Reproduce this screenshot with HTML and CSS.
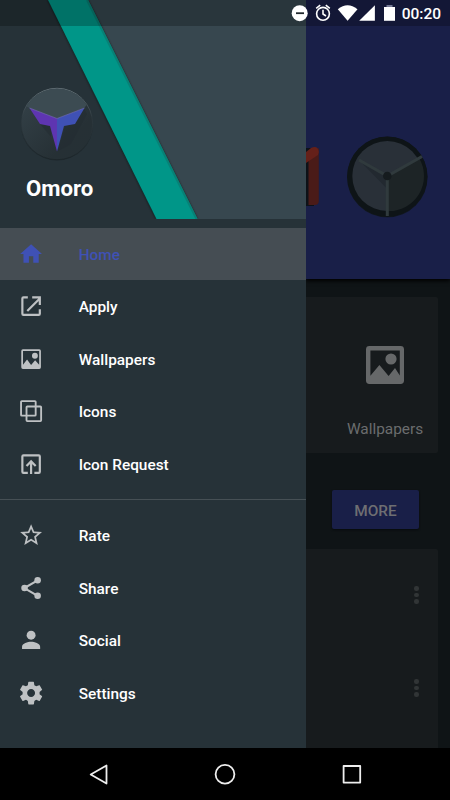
FILE: index.html
```html
<!DOCTYPE html>
<html lang="en">
<head>
<meta charset="utf-8">
<title>Omoro</title>
<link rel="stylesheet" href="styles.css">
</head>
<body>
<div class="screen">
  <div class="app">
    <aside class="drawer">
      <header class="drawer-header">
        <svg class="banner" viewBox="0 0 306 219">
          <defs><filter id="soft" x="-20%" y="-20%" width="140%" height="140%"><feGaussianBlur stdDeviation="1"/></filter></defs>
          <path fill="#37474f" d="M80 0H306V219H190z"/>
          <path d="M47.500 0H88L197.500 219H156z" fill="#00150f" opacity=".6" filter="url(#soft)"/>
          <path fill="#009688" d="M48 0H88L197.500 219H156.500z"/>
          <path d="M87 0L196.500 219" stroke="#078176" stroke-width="2"/>
        </svg>
        <div class="brand">
          <svg class="logo" viewBox="0 0 76 76">
            <defs>
              <linearGradient id="disc" x1="0" y1="0" x2="1" y2="1"><stop offset="0" stop-color="#35434a"/><stop offset=".7" stop-color="#263035"/><stop offset="1" stop-color="#253035"/></linearGradient>
              <linearGradient id="rim" x1="0" y1="0" x2="0" y2="1"><stop offset="0" stop-color="#78858b"/><stop offset=".4" stop-color="#303c42"/><stop offset="1" stop-color="#1b2428"/></linearGradient>
              <clipPath id="round"><circle cx="38" cy="38" r="35.500"/></clipPath>
            </defs>
            <circle cx="38" cy="38.600" r="36" fill="#1f292e"/>
            <circle cx="38" cy="38" r="35.700" fill="url(#disc)" stroke="url(#rim)" stroke-width=".8"/>
            <path clip-path="url(#round)" fill="#3c4b52" d="M0 16L10.500 22L38 32.500L65 22L76 10V0H0z"/>
            <path fill="#222c31" opacity=".55" d="M21 38L32 51V40zM46 40L56 37L65 22L68 28L52 58L39 65z"/>
            <path fill="#5e35b1" d="M10.500 22L38 32.500V65.500L31 40L21 38z"/>
            <path fill="#3f51b5" d="M65.500 22L38 32.500V65.500L45 40L56 38z"/>
            <path fill="none" stroke="#7771b5" stroke-width=".6" d="M10.500 22L38 32.500L65.500 22"/>
          </svg>
          <h1>Omoro</h1>
        </div>
      </header>
      <nav class="menu">
        <a class="item active"><svg viewBox="0 0 24 24"><path d="M10 20v-6h4v6h5v-8h3L12 3 2 12h3v8z"/></svg><span>Home</span></a>
        <a class="item"><svg viewBox="0 0 24 24"><path class="line" d="M9 4H5a1 1 0 0 0-1 1v14a1 1 0 0 0 1 1h14a1 1 0 0 0 1-1v-4M8.500 16.500L19.500 5.500M13 4h7v7"/></svg><span>Apply</span></a>
        <a class="item"><svg viewBox="0 0 24 24"><path fill-rule="evenodd" d="M4.500 3h15q1.500 0 1.500 1.500v15q0 1.500-1.500 1.500h-15Q3 21 3 19.500v-15Q3 3 4.500 3zM4.600 4.600v12.600l3.700-4.900 3.700 5 3.700-4.300 3.700 4.200V4.600zM15.500 6.300a2.700 2.700 0 1 1 0 5.400 2.700 2.700 0 0 1 0-5.400z"/></svg><span>Wallpapers</span></a>
        <a class="item"><svg viewBox="0 0 24 24"><path class="line thin" d="M3.500 2.800h12q.7 0 .7.700v12q0 .7-.7.700h-12q-.7 0-.7-.7v-12q0-.7.700-.7zM8.500 7.800h12q.7 0 .7.700v12q0 .7-.7.700h-12q-.7 0-.7-.7v-12q0-.7.700-.7z"/></svg><span>Icons</span></a>
        <a class="item"><svg viewBox="0 0 24 24"><path class="line" d="M9 20H5a1 1 0 0 1-1-1V5a1 1 0 0 1 1-1h14a1 1 0 0 1 1 1v14a1 1 0 0 1-1 1h-4M12 21V10.500M7.800 13.700L12 9.500l4.200 4.200"/></svg><span>Icon Request</span></a>
        <hr>
        <a class="item"><svg viewBox="0 0 24 24"><path d="M22 9.240l-7.190-.62L12 2 9.190 8.630 2 9.240l5.460 4.730L5.820 21 12 17.270 18.180 21l-1.630-7.030L22 9.240zM12 15.400l-3.760 2.270 1-4.280-3.320-2.880 4.380-.38L12 6.100l1.710 4.040 4.380.38-3.320 2.880 1 4.280L12 15.400z"/></svg><span>Rate</span></a>
        <a class="item"><svg viewBox="0 0 24 24"><path class="line" d="M18 4.900L5.800 12 18 19.100"/><circle cx="18" cy="4.900" r="3"/><circle cx="6" cy="12" r="3"/><circle cx="18" cy="19.100" r="3"/></svg><span>Share</span></a>
        <a class="item"><svg viewBox="0 0 24 24"><circle cx="12" cy="7.500" r="4.100"/><path d="M12 13.500c-3 0-8.300 1.500-8.300 4.500v2.200h16.600V18c0-3-5.300-4.500-8.300-4.500z"/></svg><span>Social</span></a>
        <a class="item"><svg viewBox="0 0 24 24"><path transform="translate(12 12) scale(1.040) translate(-12 -12)" d="M19.430 12.980c.04-.32.07-.64.07-.98s-.03-.66-.07-.98l2.110-1.650c.19-.15.24-.42.12-.64l-2-3.460c-.12-.22-.39-.3-.61-.22l-2.490 1c-.52-.4-1.080-.73-1.690-.98l-.38-2.650C14.460 2.180 14.250 2 14 2h-4c-.25 0-.46.18-.49.42l-.38 2.650c-.61.25-1.170.59-1.690.98l-2.490-1c-.23-.09-.49 0-.61.22l-2 3.460c-.13.22-.07.49.12.640l2.110 1.650c-.04.32-.07.65-.07.980s.03.66.07.98l-2.110 1.650c-.19.15-.24.42-.12.640l2 3.460c.12.22.39.3.61.22l2.490-1c.52.4 1.080.73 1.690.98l.38 2.650c.03.24.24.42.49.42h4c.25 0 .46-.18.49-.42l.38-2.650c.61-.25 1.170-.59 1.690-.98l2.490 1c.23.09.49 0 .61-.22l2-3.460c.12-.22.07-.49-.12-.640l-2.110-1.650zM12 15.500c-1.930 0-3.500-1.570-3.500-3.500s1.570-3.500 3.500-3.500 3.500 1.570 3.500 3.500-1.570 3.500-3.500 3.500z"/></svg><span>Settings</span></a>
      </nav>
    </aside>
    <main class="content">
      <section class="hero">
        <svg class="hero-art" viewBox="0 0 144 100">
          <path fill="#0d1218" d="M0 13H8V71H0z"/>
          <path fill="#4a1b18" d="M2.500 18L12.800 13V66q0 4-4 4H2.500z"/>
          <path fill="#652019" d="M0 17L5 13Q12 10 12.800 17L12 20L0 28z"/>
          <circle cx="81.300" cy="42" r="40.300" fill="#11171d"/>
          <circle cx="81.300" cy="41.500" r="40" fill="#0e1417"/>
          <circle cx="81.300" cy="41" r="35" fill="#293038"/>
          <path fill="#1d2426" d="M81.300 41L113 23A35 35 0 0 1 81.300 76z"/>
          <path fill="#222930" d="M54 26L81.300 41V54z"/>
          <path d="M53 25L81.300 41L116 21.500M81.300 41V81" fill="none" stroke="#303a3d" stroke-width="3"/>
          <circle cx="81.300" cy="41" r="4.300" fill="#151b1e"/>
        </svg>
      </section>
      <section class="card tile">
        <svg viewBox="0 0 24 24"><path fill-rule="evenodd" d="M4.200 2.500h15.600q1.700 0 1.700 1.700v15.600q0 1.700-1.700 1.700H4.200q-1.700 0-1.700-1.700V4.200q0-1.700 1.700-1.700zM4.700 4.700v12.700l4.500-5.400 4.600 5.500 3.200-4 2.400 3.700V4.700zM15 6.200a2.800 2.800 0 1 1 0 5.600 2.800 2.800 0 0 1 0-5.600z"/></svg>
        <span>Wallpapers</span>
      </section>
      <button class="more">MORE</button>
      <section class="card list">
        <div class="dots"><i></i><i></i><i></i></div>
        <div class="dots"><i></i><i></i><i></i></div>
      </section>
    </main>
  </div>
  <footer class="navbar">
    <svg viewBox="0 0 450 53"><g fill="none" stroke="#eee" stroke-width="1.800" stroke-linejoin="round"><path d="M90.700 26.500L106.500 17.500V35.500z"/><circle cx="225" cy="26.300" r="9.400"/><path d="M343.600 18H360.200V34.600H343.600z"/></g></svg>
  </footer>
  <div class="status">
    <svg viewBox="0 0 110 26">
      <g fill="#fff"><circle cx="9.700" cy="13.200" r="8"/><path fill="#20282d" d="M6 12.300h8v1.800H6z"/>
      <path d="M47.800 9.200Q57.500 1.500 67.500 9.200L57.600 20.800z"/><path d="M84.900 5.200V20.700H69.200z"/>
      <path d="M94 7h11v13.800H94z"/></g><path fill="#747894" d="M96.500 5h6v2h-6z"/>
      <g fill="none" stroke="#fff" stroke-width="1.600"><circle cx="33" cy="13.800" r="6.400"/><path d="M33 9.800V14l3 2M26.200 8.400l4-3.200M39.800 8.400l-4-3.200"/></g>
    </svg>
    <span>00:20</span>
  </div>
</div>
</body>
</html>
```
FILE: styles.css
```css
* { box-sizing: border-box; }
body { margin: 0; background: #000; font-family: Roboto, sans-serif; }
svg { display: block; }
.screen { position: relative; width: 450px; height: 800px; overflow: hidden; display: flex; flex-direction: column; }
.app { display: flex; height: 747.5px; }

.drawer { width: 306px; flex: none; background: #263238; }
.drawer-header { position: relative; height: 219px; padding: 86px 0 0 19px; }
.banner { position: absolute; inset: 0; width: 306px; height: 219px; }
.brand { position: relative; width: 82px; }
.logo { width: 76px; height: 76px; }
h1 { margin: 13px 0 0 7px; font-size: 22.2px; line-height: 26px; font-weight: 700; color: #fff; }

.menu { padding-top: 8.5px; }
.item { display: flex; align-items: center; gap: 35px; height: 52.5px; padding-left: 17.5px; color: #fff; font-size: 15.4px; font-weight: 500; }
.item span { padding-top: 1.5px; }
.item svg { width: 26.2px; height: 26.2px; fill: #bec1c3; }
.item .line { fill: none; stroke: #bec1c3; stroke-width: 2; }
.item .thin { stroke-width: 1.7; }
.item.active { background: #454d53; color: #3f51b5; }
.item.active svg { fill: #3f51b5; }
hr { margin: 8.5px 0 9.5px; border: 0; height: 1px; background: #465055; }

.content { flex: 1; display: flex; flex-direction: column; background: #0f1416; overflow: hidden; }
.hero { height: 279px; flex: none; padding-top: 135px; background: #191f48; box-shadow: 0 2px 4px #000; }
.hero-art { width: 144px; height: 100px; }
.card { background: #171b1d; margin-right: 12px; }
.tile { margin-top: 18px; height: 156px; flex: none; border-radius: 0 2px 2px 0; padding: 43.5px 0 0 26px; display: flex; flex-direction: column; align-items: center; color: #6b6d6e; font-size: 15.4px; line-height: 20px; }
.tile svg { width: 48px; height: 48px; fill: #666869; }
.tile span { margin-top: 30.5px; }
.more { margin: 37px 0 0 26px; width: 87px; height: 39px; flex: none; border: 0; border-radius: 2px; background: #191f48; color: #6e6e72; font: 500 15.4px Roboto, sans-serif; padding: 2px 0 0; box-shadow: 0 1px 2px #070b0d; }
.list { margin-top: 20px; flex: 1; border-radius: 0 2px 0 0; padding: 37px 19.5px 0 0; display: flex; flex-direction: column; align-items: flex-end; gap: 75.5px; }
.dots { display: flex; flex-direction: column; gap: 2px; }
.dots i { width: 4.5px; height: 4.5px; border-radius: 50%; background: #313536; }

.navbar { height: 52.5px; }
.navbar svg { width: 450px; height: 53px; }

.status { position: absolute; inset: 0 0 auto 0; height: 26px; display: flex; align-items: center; justify-content: space-between; padding: 0 9px 0 290.3px; background: rgba(0, 0, 0, .24); color: #fff; font-size: 15.5px; font-weight: 500; }
.status svg { width: 110px; height: 26px; flex: none; }
.status span { line-height: 24px; padding-top: 2px; }
```
